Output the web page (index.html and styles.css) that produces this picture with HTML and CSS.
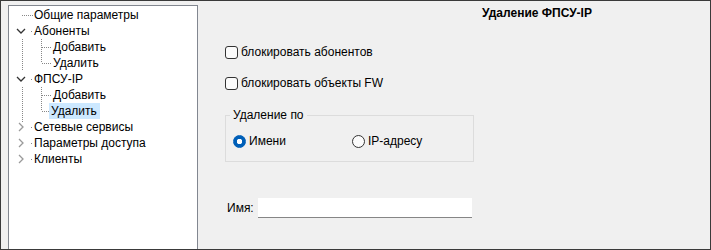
FILE: index.html
```html
<!DOCTYPE html>
<html lang="ru">
  <head>
    <meta charset="UTF-8" />
    <title>Удаление ФПСУ-IP</title>
    <link rel="stylesheet" href="styles.css">
  </head>
  <body>
    <div class="window">
      <!-- дерево настроек -->
      <div class="side">
        <div class="tree">
          <div class="row">
            <svg class="gut" width="25" height="16"><line class="dots" x1="13" y1="8.5" x2="25" y2="8.5"/></svg>
            <span class="label">Общие параметры</span>
          </div>
          <div class="row">
            <svg class="gut" width="25" height="16"><polyline class="open" points="8,6 12,10 16,6"/><rect class="dot" x="22" y="8" width="1" height="1"/></svg>
            <span class="label">Абоненты</span>
          </div>
          <div class="row">
            <svg class="gut" width="42" height="16"><line class="dots" x1="13.5" y1="0" x2="13.5" y2="16"/><line class="dots" x1="32.5" y1="0" x2="32.5" y2="16"/><line class="dots" x1="33" y1="8.5" x2="42" y2="8.5"/></svg>
            <span class="label">Добавить</span>
          </div>
          <div class="row">
            <svg class="gut" width="42" height="16"><line class="dots" x1="13.5" y1="0" x2="13.5" y2="16"/><line class="dots" x1="32.5" y1="0" x2="32.5" y2="8"/><line class="dots" x1="33" y1="8.5" x2="42" y2="8.5"/></svg>
            <span class="label">Удалить</span>
          </div>
          <div class="row">
            <svg class="gut" width="25" height="16"><polyline class="open" points="8,6 12,10 16,6"/><rect class="dot" x="22" y="8" width="1" height="1"/></svg>
            <span class="label">ФПСУ-IP</span>
          </div>
          <div class="row">
            <svg class="gut" width="42" height="16"><line class="dots" x1="13.5" y1="0" x2="13.5" y2="16"/><line class="dots" x1="32.5" y1="0" x2="32.5" y2="16"/><line class="dots" x1="33" y1="8.5" x2="42" y2="8.5"/></svg>
            <span class="label">Добавить</span>
          </div>
          <div class="row">
            <svg class="gut" width="40" height="16"><line class="dots" x1="13.5" y1="0" x2="13.5" y2="16"/><line class="dots" x1="32.5" y1="0" x2="32.5" y2="8"/><line class="dots" x1="33" y1="8.5" x2="40" y2="8.5"/></svg>
            <span class="label selected">Удалить</span>
          </div>
          <div class="row">
            <svg class="gut" width="25" height="16"><line class="dots" x1="13.5" y1="0" x2="13.5" y2="4"/><polyline class="closed" points="10,4 14,8 10,12"/><rect class="dot" x="22" y="8" width="1" height="1"/></svg>
            <span class="label">Сетевые сервисы</span>
          </div>
          <div class="row">
            <svg class="gut" width="25" height="16"><polyline class="closed" points="10,4 14,8 10,12"/><rect class="dot" x="22" y="8" width="1" height="1"/></svg>
            <span class="label">Параметры доступа</span>
          </div>
          <div class="row">
            <svg class="gut" width="25" height="16"><polyline class="closed" points="10,4 14,8 10,12"/><rect class="dot" x="22" y="8" width="1" height="1"/></svg>
            <span class="label">Клиенты</span>
          </div>
        </div>
      </div>

      <!-- форма -->
      <div class="main">
        <div class="title">Удаление ФПСУ-IP</div>

        <div class="check first">
          <span class="box"></span>
          <span>блокировать абонентов</span>
        </div>
        <div class="check">
          <span class="box"></span>
          <span>блокировать объекты FW</span>
        </div>

        <fieldset class="group">
          <legend>Удаление по</legend>
          <div class="radios">
            <div class="radio wide">
              <span class="circle on"></span>
              <span>Имени</span>
            </div>
            <div class="radio">
              <span class="circle"></span>
              <span>IP-адресу</span>
            </div>
          </div>
        </fieldset>

        <div class="name-row">
          <span class="name-label">Имя:</span>
          <div class="field"></div>
        </div>
      </div>
    </div>
  </body>
</html>
```

FILE: styles.css
```css
/* окно */
body {
  margin: 0;
  font-family: "Liberation Sans", Arial, sans-serif;
  font-size: 12px;
  color: #000;
}
.window {
  width: 711px;
  height: 250px;
  box-sizing: border-box;
  border: 1px solid #3a3a3a;
  background-color: #f0f0f0;
  display: flex;
  overflow: hidden;
}

/* левая панель с деревом */
.side {
  padding: 4px 0 0 7px;
  display: flex;
}
.tree {
  width: 190px;
  box-sizing: border-box;
  background-color: #fff;
  border: 1px solid #828790;
  border-bottom: none;
  padding-top: 1px;
}
.row {
  height: 16px;
  display: flex;
  align-items: center;
}
.gut {
  flex: none;
  display: block;
}
.dots {
  stroke: #888;
  stroke-width: 1;
  stroke-dasharray: 1 1;
}
.dot {
  fill: #888;
}
.open {
  fill: none;
  stroke: #333;
  stroke-width: 1.3;
}
.closed {
  fill: none;
  stroke: #9a9a9a;
  stroke-width: 1.3;
}
.label {
  line-height: 16px;
  white-space: nowrap;
}
.selected {
  background-color: #cce8ff;
  padding: 0 3px 0 2px;
}
.gut[width="42"] + .label {
  padding-left: 2px;
}

/* правая часть */
.main {
  flex: 1;
  padding: 5px 0 0 27px;
}
.title {
  font-weight: bold;
  line-height: 15px;
  padding-left: 257px;
}
.check {
  display: flex;
  align-items: center;
  height: 16px;
  margin-top: 15px;
}
.check.first {
  margin-top: 23px;
}
.box {
  width: 11px;
  height: 11px;
  border: 1px solid #333;
  border-radius: 3px;
  background-color: #fbfbfb;
  margin-right: 3px;
}

.group {
  margin: 17px 0 0 0;
  width: 249px;
  box-sizing: border-box;
  border: 1px solid #dcdcdc;
  padding: 0 0 12px 7px;
  min-width: 0;
}
.group legend {
  padding: 0 3px;
  margin-left: -3px;
  line-height: 14px;
}
.radios {
  display: flex;
  margin-top: 11px;
}
.radio {
  display: flex;
  align-items: center;
  height: 16px;
}
.radio.wide {
  width: 119px;
}
.circle {
  width: 11px;
  height: 11px;
  border: 1px solid #333;
  border-radius: 50%;
  background-color: #fbfbfb;
  margin-right: 3px;
  box-sizing: content-box;
}
.circle.on {
  border-color: #005fb8;
  background: radial-gradient(circle, #fff 0 2.5px, #005fb8 3px);
}

.name-row {
  display: flex;
  align-items: center;
  margin-top: 36px;
}
.name-label {
  width: 31px;
  margin-left: 2px;
  flex: none;
}
.field {
  width: 214px;
  height: 19px;
  background-color: #fff;
  border-bottom: 1px solid #868686;
}
```
